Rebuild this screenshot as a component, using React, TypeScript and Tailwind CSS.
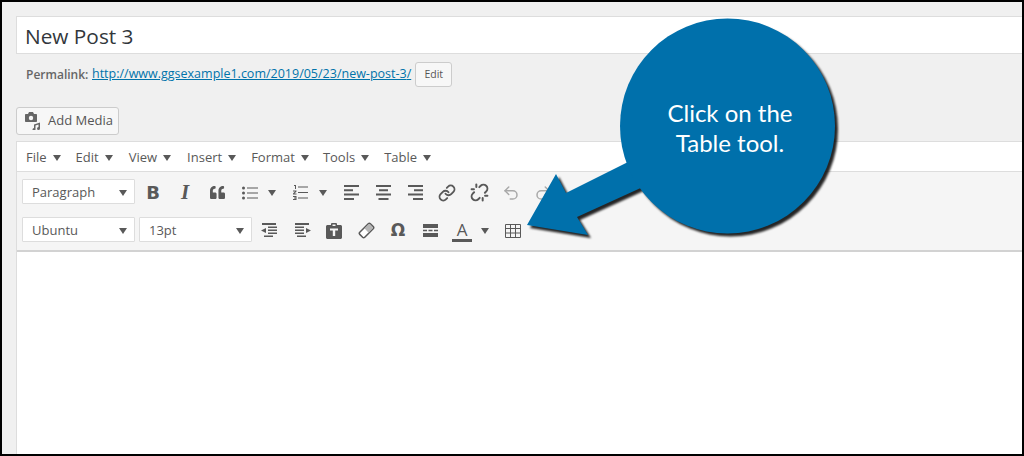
import type { ReactNode } from 'react';
import { FaQuoteLeft } from 'react-icons/fa';
import { Link, Redo2, Undo2, Unlink } from 'lucide-react';

const font = "font-['Open_Sans',_sans-serif]";

const menus = [
  { label: 'File', cls: '' },
  { label: 'Edit', cls: 'ml-[15px]' },
  { label: 'View', cls: 'ml-[16px]' },
  { label: 'Insert', cls: 'ml-[16px]' },
  { label: 'Format', cls: 'ml-[15px]' },
  { label: 'Tools', cls: 'ml-[14px]' },
  { label: 'Table', cls: 'ml-[15px]' },
];

const Caret = () => (
  <svg width="8" height="6" viewBox="0 0 8 6" className="shrink-0">
    <path d="M0 0h8L4 6z" fill="#595959" />
  </svg>
);

const Select = ({ label, width, cls = '' }: { label: string; width: string; cls?: string }) => (
  <div className={`flex h-[25px] items-center justify-between rounded-[1px] border border-[#ddd] bg-white pl-[9px] pr-[7px] pt-[2px] text-[13px] text-[#595959] ${width} ${cls}`}>
    <span>{label}</span>
    <Caret />
  </div>
);

const Btn = ({ children, cls = '' }: { children: ReactNode; cls?: string }) => (
  <div className={`flex h-[25px] w-8 shrink-0 items-center justify-center pt-[2px] text-[#595959] ${cls}`}>{children}</div>
);

const CaretBtn = ({ cls = '' }: { cls?: string }) => (
  <div className={`flex h-[25px] w-3 shrink-0 items-center justify-center pt-[2px] ${cls}`}>
    <Caret />
  </div>
);

const BulletList = () => (
  <svg width="16" height="14" viewBox="0 0 16 14" fill="#595959">
    <circle cx="1.5" cy="2" r="1.5" />
    <circle cx="1.5" cy="7" r="1.5" />
    <circle cx="1.5" cy="12" r="1.5" />
    <path d="M5 1.5h11v1H5zM5 6.5h11v1H5zM5 11.5h11v1H5z" />
  </svg>
);

const NumberList = () => (
  <svg width="15" height="15" viewBox="0 0 15 15" fill="#595959">
    <path d="M1 0h2v4H2V1H1zM0 5.5h3.5v1L1.5 8.5h2V9.500H0v-1l2-2H0zM0 11h3.500v4H0v-1h2.500v-.5H1v-1h1.500V12H0z" />
    <path d="M5 1.500h10v1H5zM5 7h10v1H5zM5 12.500h10v1H5z" />
  </svg>
);

const Align = ({ mode }: { mode: 'left' | 'center' | 'right' }) => {
  const d = {
    left: 'M0 0h15v2H0zM0 4.300h9v2H0zM0 8.600h15v2H0zM0 12.900h10v2H0z',
    center: 'M0 0h15v2H0zM3 4.300h9v2H3zM0 8.600h15v2H0zM2.500 12.900h10v2h-10z',
    right: 'M0 0h15v2H0zM6 4.300h9v2H6zM0 8.600h15v2H0zM5 12.900h10v2H5z',
  }[mode];
  return (
    <svg width="15" height="15" viewBox="0 0 15 15" fill="#595959">
      <path d={d} />
    </svg>
  );
};

const Outdent = () => (
  <svg width="16" height="15" viewBox="0 0 16 15" fill="#595959">
    <path d="M1 0h14v2H1zM7 3.500h9v1.500H7zM7 6.500h9V8H7zM7 9.500h9V11H7zM3 12.500h9V14H3zM5 5v5L0 7.500z" />
  </svg>
);

const Indent = () => (
  <svg width="16" height="15" viewBox="0 0 16 15" fill="#595959">
    <path d="M0 0h14v2H0zM0 3.500h9v1.500H0zM0 6.500h9V8H0zM0 9.500h9V11H0zM2 12.500h9V14H2zM11 5v5l5-2.500z" />
  </svg>
);

const Paste = () => (
  <svg width="16" height="16" viewBox="0 0 16 16">
    <path d="M1.500 2H5V1.200C5 .5 5.500 0 6.200 0h3.600c.7 0 1.200.5 1.200 1.200V2h3.500c.8 0 1.500.7 1.500 1.500v11c0 .8-.7 1.500-1.500 1.500h-13C.7 16 0 15.300 0 14.500v-11C0 2.700.7 2 1.500 2z" fill="#595959" />
    <path d="M4 5.500h8v2H9.200V13H6.800V7.500H4zM6.500 1.500h3V3h-3z" fill="#f5f5f5" />
  </svg>
);

const EraserIcon = () => (
  <svg width="17" height="17" viewBox="0 0 17 17">
    <g transform="rotate(-45 8.500 8.500)">
      <rect x="1" y="5" width="15" height="7" rx="1.500" fill="#fff" stroke="#595959" strokeWidth="1.500" />
      <path d="M8.500 5.800h6c.5 0 .8.300.8.800v3.800c0 .5-.3.800-.8.800h-6z" fill="#b5b5b5" />
    </g>
  </svg>
);

const HorizontalRule = () => (
  <svg width="15" height="13" viewBox="0 0 15 13" fill="#595959">
    <path d="M0 0h15v4H0zM0 5.800h4v1.400H0zM5.500 5.800h4v1.400h-4zM11 5.800h4v1.400h-4zM0 9h15v4H0z" />
  </svg>
);

const TableIcon = () => (
  <svg width="16" height="14" viewBox="0 0 16 14" fill="none" stroke="#595959">
    <path d="M.5.500h15v13H.500zM.5 4.500h15M.5 9h15M5.500.5v13M10.500.5v13" />
  </svg>
);

const MediaIcon = () => (
  <svg width="16" height="18" viewBox="0 0 16 18" fill="#666">
    <path d="M1 2h2l1-2h4l1 2h2c.6 0 1 .4 1 1v6c0 .6-.4 1-1 1H1c-.6 0-1-.4-1-1V3c0-.6.4-1 1-1z" />
    <circle cx="6" cy="6" r="2.200" fill="#f7f7f7" />
    <path d="M9 12.500l6-2v6a1.500 1.500 0 1 1-1.500-1.500V12.500l-3 1v4a1.500 1.500 0 1 1-1.500-1.500z" />
  </svg>
);

export default function App() {
  return (
    <div className={`relative h-[456px] w-[1024px] overflow-hidden border-2 border-black bg-[#f0f0f0] pl-[14px] pt-[14px] ${font}`}>
      <div className="-mr-1 flex h-[38px] items-center border border-r-0 border-[#ddd] bg-white pl-[8px] pt-[3px] text-[20.800px] text-[#32373c]">
        New Post 3
      </div>

      <div className="mt-2 flex h-[25px] items-center pl-[10px] text-[12.500px] text-[#666]">
        <span className="w-[66px] text-[12px] font-semibold">Permalink:</span>
        <span className="text-[#0073aa] underline">
          http://www.ggsexample1.com/2019/05/23/<span className="font-medium">new-post-3</span>/
        </span>
        <span className="ml-[4px] flex h-[25px] w-[37px] items-center justify-center rounded-[3px] border border-[#ccc] bg-[#f7f7f7] text-[10.500px] text-[#555]">
          Edit
        </span>
      </div>

      <div className="mt-5 flex h-[28px] w-[103px] items-center rounded-[3px] border border-[#ccc] bg-[#f7f7f7] pl-[8px] text-[13px] text-[#555]">
        <MediaIcon />
        <span className="ml-[7px]">Add Media</span>
      </div>

      <div className="mt-[6px] h-[400px] border-l border-t border-[#ddd] bg-white">
        <div className="flex h-[30px] items-center border-b border-[#ddd] pl-[9px] pt-[2px] text-[13px] text-[#595959]">
          {menus.map((m) => (
            <div key={m.label} className={`flex items-center gap-[6px] ${m.cls}`}>
              <span>{m.label}</span>
              <Caret />
            </div>
          ))}
        </div>

        <div className="h-[80px] border-b-2 border-[#d2d2d2] bg-[#f5f5f5] pl-[5px] pt-[7px]">
          <div className="flex items-center">
            <Select label="Paragraph" width="w-[113px]" />
            <Btn cls="ml-[2px] font-['DejaVu_Sans',_sans-serif] text-[18px] font-bold">B</Btn>
            <Btn cls="font-['Liberation_Serif',_serif] text-[21px] font-bold italic">I</Btn>
            <Btn><FaQuoteLeft size={15} /></Btn>
            <Btn cls="ml-[1px]"><BulletList /></Btn>
            <CaretBtn />
            <Btn cls="ml-[6px]"><NumberList /></Btn>
            <CaretBtn cls="ml-[1px]" />
            <Btn cls="ml-[6px]"><Align mode="left" /></Btn>
            <Btn><Align mode="center" /></Btn>
            <Btn><Align mode="right" /></Btn>
            <Btn><Link size={18} strokeWidth={2.500} /></Btn>
            <Btn><Unlink size={19} strokeWidth={2.500} /></Btn>
            <Btn><Undo2 size={18} color="#a9a9a9" /></Btn>
            <Btn><Redo2 size={18} color="#a9a9a9" /></Btn>
          </div>
          <div className="mt-[13px] flex items-center">
            <Select label="Ubuntu" width="w-[113px]" />
            <Select label="13pt" width="w-[113px]" cls="ml-[4px]" />
            <Btn cls="ml-px"><Outdent /></Btn>
            <Btn cls="ml-[2px]"><Indent /></Btn>
            <Btn cls="-ml-px"><Paste /></Btn>
            <Btn><EraserIcon /></Btn>
            <Btn cls="font-['DejaVu_Sans',_sans-serif] text-[17px] font-bold">Ω</Btn>
            <Btn><HorizontalRule /></Btn>
            <Btn>
              <span className="w-5 border-b-[3px] border-[#595959] text-center text-[17px] leading-[19px]">A</span>
            </Btn>
            <CaretBtn cls="ml-px" />
            <Btn cls="ml-[6px]"><TableIcon /></Btn>
          </div>
        </div>
      </div>

      {/* callout drawn over the editor */}
      <svg
        className="absolute left-0 top-0 drop-shadow-[3px_3px_1px_rgba(0,0,0,0.85)]"
        width="1020"
        height="452"
        viewBox="2 2 1020 452"
      >
        <path d="M527 225L556 174L566 193L630 161L645 186L577 217L588 235Z" fill="#0070ab" />
        <circle cx="727.500" cy="126" r="107.500" fill="#0070ab" />
      </svg>
      <div className="absolute left-[618px] top-[96px] w-[220px] text-center font-['Lato',_sans-serif] text-[24px] leading-[30px] text-white">
        Click on the
        <br />
        Table tool.
      </div>
    </div>
  );
}
